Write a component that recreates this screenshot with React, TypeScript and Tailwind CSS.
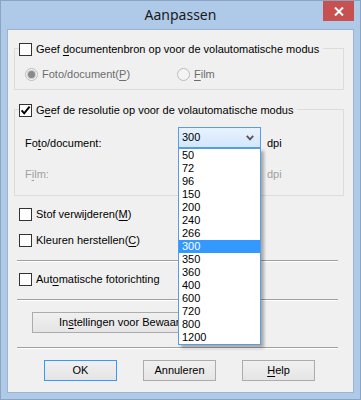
import React from "react";

function U({ children }: { children: React.ReactNode }) {
  return <span className="underline decoration-1 underline-offset-[2px]">{children}</span>;
}

function CheckBox({ checked = false }: { checked?: boolean }) {
  return (
    <span className="flex h-[13px] w-[13px] shrink-0 items-center justify-center border border-[#333333] bg-white">
      {checked && (
        <svg width="11" height="11" viewBox="0 0 11 11">
          <path d="M1.6 5.4 L4.2 8.3 L9.6 1.6" fill="none" stroke="#000" strokeWidth="2" />
        </svg>
      )}
    </span>
  );
}

function Radio({ checked = false }: { checked?: boolean }) {
  return (
    <span className="flex h-[13px] w-[13px] shrink-0 items-center justify-center rounded-full border border-[#bcbcbc] bg-[#f4f4f4]">
      {checked && <span className="h-[7px] w-[7px] rounded-full bg-[#8a8a8a] ring-1 ring-[#c8c8c8]" />}
    </span>
  );
}

function Button({ children, focused = false, className = "" }: { children: React.ReactNode; focused?: boolean; className?: string }) {
  return (
    <div
      className={`flex h-[21px] items-center justify-center border bg-gradient-to-b from-[#f0f0f0] to-[#e5e5e5] text-black ${
        focused ? "border-[#3399ff]" : "border-[#acacac]"
      } ${className}`}
    >
      {children}
    </div>
  );
}

function Separator({ className = "" }: { className?: string }) {
  return <div className={`ml-[9px] h-[2px] w-[321px] border-t border-b border-t-[#a0a0a0] border-b-white ${className}`} />;
}

const items = ["50", "72", "96", "150", "200", "240", "266", "300", "350", "360", "400", "600", "720", "800", "1200"];

export default function App() {
  return (
    <div className="relative flex h-[400px] w-[361px] flex-col border border-[#8aa5c2] bg-[#aecae8] px-[6px] pb-[6px] font-['Liberation_Sans',Arial,sans-serif] text-[11px] leading-[13px] text-black">
      {/* Title bar */}
      <div className="flex h-[28px] shrink-0 items-center justify-center">
        <span className="font-['Noto_Sans',sans-serif] text-[14px] leading-[18px] text-[#1a1a1a]">Aanpassen</span>
      </div>
      <div className="absolute right-[6px] top-0 flex h-[20px] w-[31px] items-center justify-center bg-[#c75050]">
        <svg width="10" height="9" viewBox="0 0 10 9">
          <path d="M1 0.5 L9 8.5 M9 0.5 L1 8.5" stroke="#fff" strokeWidth="2" />
        </svg>
      </div>

      {/* Client area */}
      <div className="relative flex h-[364px] w-[347px] flex-col items-start border border-[#9db4cd] bg-[#f0f0f0]">
        {/* Group 1 */}
        <div className="ml-[6px] mt-[18px] flex h-[42px] w-[330px] flex-col items-start border border-[#dcdcdc]">
          <div className="-mt-[6px] ml-[4px] flex h-[13px] items-center gap-[4px] bg-[#f0f0f0] pr-[4px]">
            <CheckBox />
            <span>
              Geef <U>d</U>ocumentenbron op voor de volautomatische modus
            </span>
          </div>
          <div className="ml-[10px] mt-[12px] flex h-[13px] items-center text-[#6d6d6d]">
            <div className="flex w-[152px] items-center gap-[4px]">
              <Radio checked />
              <span>
                Foto/document(<U>P</U>)
              </span>
            </div>
            <div className="flex items-center gap-[4px]">
              <Radio />
              <span>
                <U>F</U>ilm
              </span>
            </div>
          </div>
        </div>

        {/* Group 2 */}
        <div className="ml-[6px] mt-[19px] flex h-[87px] w-[330px] flex-col items-start border border-[#dcdcdc]">
          <div className="-mt-[6px] ml-[4px] flex h-[13px] items-center gap-[4px] bg-[#f0f0f0] pr-[4px]">
            <CheckBox checked />
            <span>
              G<U>e</U>ef de resolutie op voor de volautomatische modus
            </span>
          </div>
          <div className="ml-[10px] mt-[10px] flex h-[21px] items-start">
            <span className="w-[153px] pt-[10px]">
              Fo<U>t</U>o/document:
            </span>
            <div className="flex h-[21px] w-[83px] items-center justify-between border border-[#569de5] bg-gradient-to-b from-[#e8f2fd] to-[#d3e7fc] pl-[3px] pr-[6px]">
              <span>300</span>
              <svg width="8" height="6" viewBox="0 0 8 6">
                <path d="M0.8 0.8 L4 4.4 L7.2 0.8" fill="none" stroke="#555" strokeWidth="1.8" />
              </svg>
            </div>
            <span className="ml-[6px] pt-[10px]">dpi</span>
          </div>
          <div className="ml-[10px] mt-[20px] flex h-[13px] items-start text-[#a0a0a0]">
            <span className="w-[242px]">
              F<U>i</U>lm:
            </span>
            <span>dpi</span>
          </div>
        </div>

        <div className="ml-[11px] mt-[12px] flex h-[13px] items-center gap-[4px]">
          <CheckBox />
          <span>
            Stof verwijderen(<U>M</U>)
          </span>
        </div>
        <div className="ml-[11px] mt-[13px] flex h-[13px] items-center gap-[4px]">
          <CheckBox />
          <span>
            Kleuren herstellen(<U>C</U>)
          </span>
        </div>
        <Separator className="mt-[13px]" />
        <div className="ml-[11px] mt-[11px] flex h-[13px] items-center gap-[4px]">
          <CheckBox />
          <span>
            Aut<U>o</U>matische fotorichting
          </span>
        </div>
        <Separator className="mt-[13px]" />
        <div className="ml-[24px] mt-[11px] flex h-[21px] w-[148px] items-center overflow-hidden whitespace-nowrap border border-r-0 border-[#acacac] bg-gradient-to-b from-[#f0f0f0] to-[#e5e5e5] pl-[26px]">
          <span>
            In<U>s</U>tellingen voor Bewaar
          </span>
        </div>
        <Separator className="mt-[14px]" />
        <div className="ml-[36px] mt-[11px] flex gap-[26px]">
          <Button focused className="w-[73px]">
            OK
          </Button>
          <Button className="w-[73px]">Annuleren</Button>
          <Button className="w-[73px]">
            <span>
              <U>H</U>elp
            </span>
          </Button>
        </div>

        {/* Dropdown list overlay */}
        <div className="absolute left-[170px] top-[118px] flex w-[83px] flex-col border border-[#569de5] bg-white py-0 shadow-[3px_3px_3px_rgba(0,0,0,0.3)]">
          {items.map((v) => (
            <div
              key={v}
              className={`h-[13px] pl-[3px] leading-[13px] ${v === "300" ? "bg-[#3399ff] text-white" : "text-black"}`}
            >
              {v}
            </div>
          ))}
        </div>
      </div>
    </div>
  );
}
